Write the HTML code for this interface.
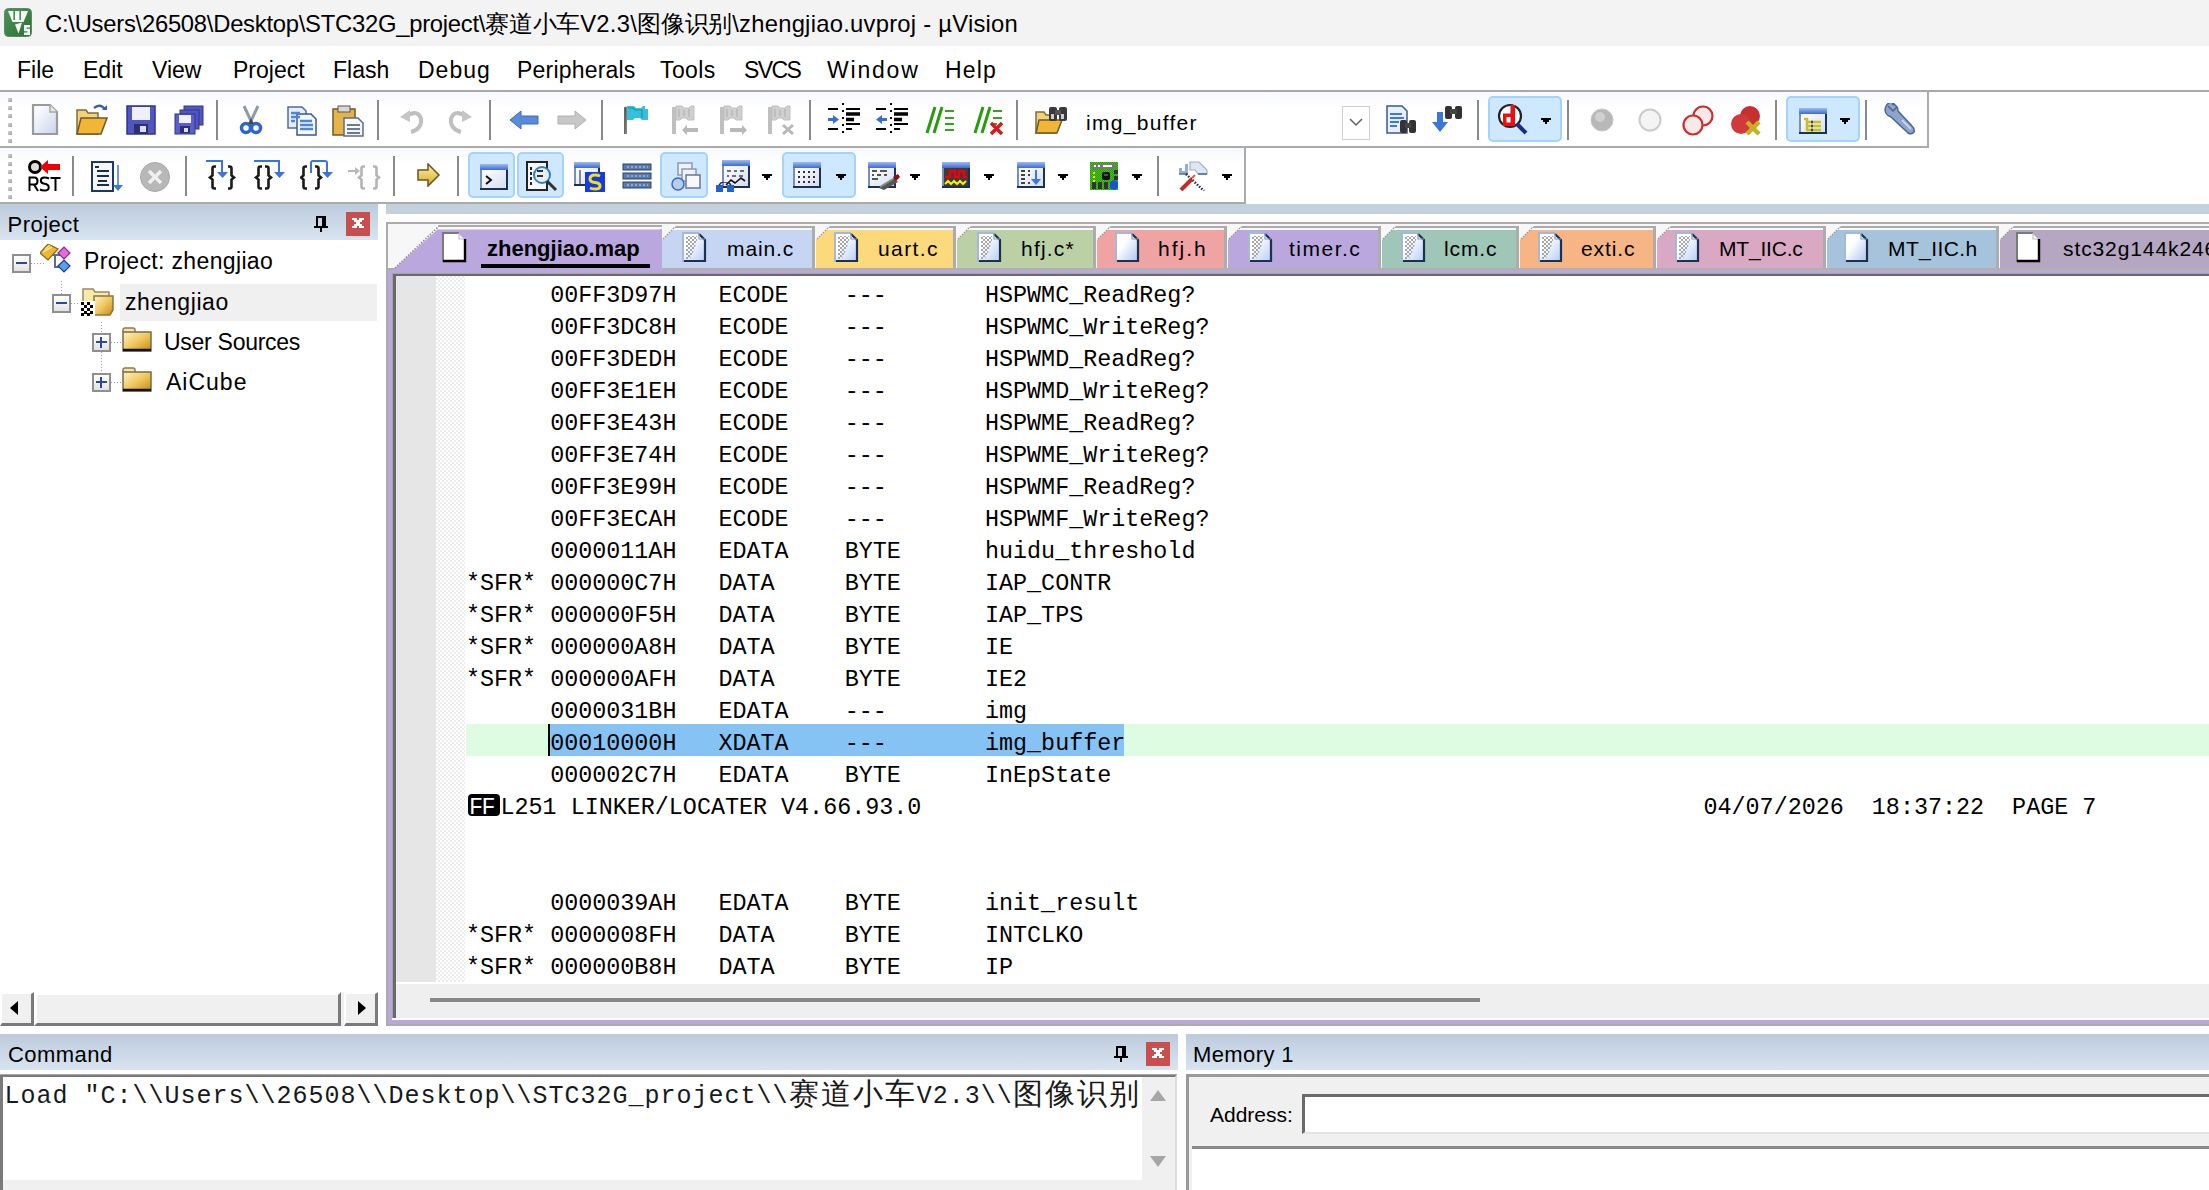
<!DOCTYPE html><html><head><meta charset="utf-8"><style>html,body{margin:0;padding:0;}body{width:2209px;height:1190px;overflow:hidden;position:relative;background:#fff;font-family:"Liberation Sans",sans-serif;color:#000;}div{box-sizing:border-box;}</style></head><body>
<div style="position:absolute;left:0px;top:0px;width:2209px;height:46px;background:#f3f3f3"></div>
<svg style="position:absolute;left:4px;top:8px;shape-rendering:auto" width="28" height="29" viewBox="0 0 28 29" shape-rendering="crispEdges"><defs><linearGradient id="lg" x1="0" y1="0" x2="1" y2="1"><stop offset="0" stop-color="#4a9458"/><stop offset="1" stop-color="#2e7238"/></linearGradient></defs><rect x="0.5" y="0.5" width="27" height="28" rx="4" fill="url(#lg)" stroke="#5a8a60" stroke-width="1"/><path d="M4 3H24L19.5 14H8.5Z" fill="#f4faf4"/><path d="M10.2 3V12M16.2 3V12" stroke="#4a8a52" stroke-width="1.6"/><path d="M11 16.5L18 14.5L14.5 25.5Z" fill="#f4faf4"/><path d="M20 17H26V19.6H22.6V20.8H26V27H20V24.4H23.4V23.2H20Z" fill="#f4faf4"/></svg>
<div style="position:absolute;left:45px;top:12px;font-family:'Liberation Sans', sans-serif;font-size:23.8px;line-height:1;white-space:pre;"><span style="letter-spacing:-0.25px">C:\Users\26508\Desktop\STC32G_project\</span><span style="display:inline-block;width:23.75px;text-align:center;font-size:23.8px;">赛</span><span style="display:inline-block;width:23.75px;text-align:center;font-size:23.8px;">道</span><span style="display:inline-block;width:23.75px;text-align:center;font-size:23.8px;">小</span><span style="display:inline-block;width:23.75px;text-align:center;font-size:23.8px;">车</span><span style="letter-spacing:0.28px">V2.3\</span><span style="display:inline-block;width:23.75px;text-align:center;font-size:23.8px;">图</span><span style="display:inline-block;width:23.75px;text-align:center;font-size:23.8px;">像</span><span style="display:inline-block;width:23.75px;text-align:center;font-size:23.8px;">识</span><span style="display:inline-block;width:23.75px;text-align:center;font-size:23.8px;">别</span><span style="letter-spacing:0.25px">\zhengjiao.uvproj - µVision</span></div>
<div style="position:absolute;left:17px;top:58.5px;font-family:'Liberation Sans', sans-serif;font-size:23px;line-height:1;white-space:pre;letter-spacing:0px">File</div>
<div style="position:absolute;left:83px;top:58.5px;font-family:'Liberation Sans', sans-serif;font-size:23px;line-height:1;white-space:pre;letter-spacing:0px">Edit</div>
<div style="position:absolute;left:152px;top:58.5px;font-family:'Liberation Sans', sans-serif;font-size:23px;line-height:1;white-space:pre;letter-spacing:0px">View</div>
<div style="position:absolute;left:233px;top:58.5px;font-family:'Liberation Sans', sans-serif;font-size:23px;line-height:1;white-space:pre;letter-spacing:0px">Project</div>
<div style="position:absolute;left:333px;top:58.5px;font-family:'Liberation Sans', sans-serif;font-size:23px;line-height:1;white-space:pre;letter-spacing:0px">Flash</div>
<div style="position:absolute;left:418px;top:58.5px;font-family:'Liberation Sans', sans-serif;font-size:23px;line-height:1;white-space:pre;letter-spacing:1.0px">Debug</div>
<div style="position:absolute;left:517px;top:58.5px;font-family:'Liberation Sans', sans-serif;font-size:23px;line-height:1;white-space:pre;letter-spacing:0.2px">Peripherals</div>
<div style="position:absolute;left:660px;top:58.5px;font-family:'Liberation Sans', sans-serif;font-size:23px;line-height:1;white-space:pre;letter-spacing:0.4px">Tools</div>
<div style="position:absolute;left:744px;top:58.5px;font-family:'Liberation Sans', sans-serif;font-size:23px;line-height:1;white-space:pre;letter-spacing:-1.6px">SVCS</div>
<div style="position:absolute;left:827px;top:58.5px;font-family:'Liberation Sans', sans-serif;font-size:23px;line-height:1;white-space:pre;letter-spacing:1.8px">Window</div>
<div style="position:absolute;left:945px;top:58.5px;font-family:'Liberation Sans', sans-serif;font-size:23px;line-height:1;white-space:pre;letter-spacing:1.2px">Help</div>
<div style="position:absolute;left:0px;top:90px;width:2209px;height:2px;background:#a9a9a9"></div>
<div style="position:absolute;left:0px;top:92px;width:1929px;height:56px;background:linear-gradient(#f7f9fd,#ffffff 30%);border-right:2px solid #ababab;border-bottom:2px solid #ababab"></div>
<div style="position:absolute;left:0px;top:148px;width:1246px;height:56px;background:linear-gradient(#f7f9fd,#ffffff 30%);border-right:2px solid #ababab;border-bottom:2px solid #ababab"></div>
<div style="position:absolute;left:8px;top:98.0px;width:4px;height:4px;background:linear-gradient(135deg,#d8d8d8,#a0a0a0)"></div><div style="position:absolute;left:8px;top:106.2px;width:4px;height:4px;background:linear-gradient(135deg,#d8d8d8,#a0a0a0)"></div><div style="position:absolute;left:8px;top:114.4px;width:4px;height:4px;background:linear-gradient(135deg,#d8d8d8,#a0a0a0)"></div><div style="position:absolute;left:8px;top:122.6px;width:4px;height:4px;background:linear-gradient(135deg,#d8d8d8,#a0a0a0)"></div><div style="position:absolute;left:8px;top:130.8px;width:4px;height:4px;background:linear-gradient(135deg,#d8d8d8,#a0a0a0)"></div><div style="position:absolute;left:8px;top:139.0px;width:4px;height:4px;background:linear-gradient(135deg,#d8d8d8,#a0a0a0)"></div>
<div style="position:absolute;left:8px;top:154.0px;width:4px;height:4px;background:linear-gradient(135deg,#d8d8d8,#a0a0a0)"></div><div style="position:absolute;left:8px;top:162.2px;width:4px;height:4px;background:linear-gradient(135deg,#d8d8d8,#a0a0a0)"></div><div style="position:absolute;left:8px;top:170.4px;width:4px;height:4px;background:linear-gradient(135deg,#d8d8d8,#a0a0a0)"></div><div style="position:absolute;left:8px;top:178.6px;width:4px;height:4px;background:linear-gradient(135deg,#d8d8d8,#a0a0a0)"></div><div style="position:absolute;left:8px;top:186.8px;width:4px;height:4px;background:linear-gradient(135deg,#d8d8d8,#a0a0a0)"></div><div style="position:absolute;left:8px;top:195.0px;width:4px;height:4px;background:linear-gradient(135deg,#d8d8d8,#a0a0a0)"></div>
<div style="position:absolute;left:216px;top:100px;width:2px;height:40px;background:#8a8a8a"></div>
<div style="position:absolute;left:377px;top:100px;width:2px;height:40px;background:#8a8a8a"></div>
<div style="position:absolute;left:489px;top:100px;width:2px;height:40px;background:#8a8a8a"></div>
<div style="position:absolute;left:601px;top:100px;width:2px;height:40px;background:#8a8a8a"></div>
<div style="position:absolute;left:809px;top:100px;width:2px;height:40px;background:#8a8a8a"></div>
<div style="position:absolute;left:1016px;top:100px;width:2px;height:40px;background:#8a8a8a"></div>
<div style="position:absolute;left:1477px;top:100px;width:2px;height:40px;background:#8a8a8a"></div>
<div style="position:absolute;left:1567px;top:100px;width:2px;height:40px;background:#8a8a8a"></div>
<div style="position:absolute;left:1775px;top:100px;width:2px;height:40px;background:#8a8a8a"></div>
<div style="position:absolute;left:1865px;top:100px;width:2px;height:40px;background:#8a8a8a"></div>
<div style="position:absolute;left:72px;top:156px;width:2px;height:40px;background:#8a8a8a"></div>
<div style="position:absolute;left:185px;top:156px;width:2px;height:40px;background:#8a8a8a"></div>
<div style="position:absolute;left:393px;top:156px;width:2px;height:40px;background:#8a8a8a"></div>
<div style="position:absolute;left:457px;top:156px;width:2px;height:40px;background:#8a8a8a"></div>
<div style="position:absolute;left:1157px;top:156px;width:2px;height:40px;background:#8a8a8a"></div>
<div style="position:absolute;left:1488px;top:96px;width:74px;height:46px;background:#cde8ff;border:2px solid #a5d3fb;border-radius:5px"></div>
<div style="position:absolute;left:1786px;top:96px;width:74px;height:46px;background:#cde8ff;border:2px solid #a5d3fb;border-radius:5px"></div>
<div style="position:absolute;left:468px;top:152px;width:47px;height:46px;background:#cde8ff;border:2px solid #a5d3fb;border-radius:5px"></div>
<div style="position:absolute;left:517px;top:152px;width:47px;height:46px;background:#cde8ff;border:2px solid #a5d3fb;border-radius:5px"></div>
<div style="position:absolute;left:660px;top:152px;width:48px;height:46px;background:#cde8ff;border:2px solid #a5d3fb;border-radius:5px"></div>
<div style="position:absolute;left:782px;top:152px;width:74px;height:46px;background:#cde8ff;border:2px solid #a5d3fb;border-radius:5px"></div>
<svg width="0" height="0" style="position:absolute"><defs><linearGradient id="wt" x1="0" y1="0" x2="0" y2="1"><stop offset="0" stop-color="#9cbcf0"/><stop offset="1" stop-color="#3a6ad8"/></linearGradient><linearGradient id="wb" x1="0" y1="0" x2="1" y2="1"><stop offset="0" stop-color="#ffffff"/><stop offset="1" stop-color="#d4ddf0"/></linearGradient></defs></svg>
<svg style="position:absolute;left:31px;top:103px" width="28" height="32" viewBox="0 0 28 32"><defs><linearGradient id="ng" x1="0" y1="0" x2="1" y2="1"><stop offset="0.2" stop-color="#f8faff"/><stop offset="1" stop-color="#c8d4ec"/></linearGradient></defs><path d="M2 2H19L26 9V31H2Z" fill="url(#ng)" stroke="#9a9a9a" stroke-width="2.2"/><path d="M19 2V9H26" fill="#e8e8e8" stroke="#a8a8a8" stroke-width="1.5"/></svg>
<svg style="position:absolute;left:76px;top:104px" width="32" height="32" viewBox="0 0 32 32"><path d="M1 6H10L12 9H22V30H1Z" fill="#f3d27a" stroke="#7f6b43" stroke-width="1.5"/><path d="M5 14H31L25 30H1Z" fill="#f1b636" stroke="#6b5a30" stroke-width="1.5"/><path d="M18 4Q24 -1 29 5" stroke="#3b5ea8" stroke-width="2.5" fill="none"/><path d="M26 6H31V1Z" fill="#3b5ea8"/></svg>
<svg style="position:absolute;left:126px;top:105px" width="30" height="30" viewBox="0 0 30 30"><rect x="1" y="1" width="28" height="28" fill="#5157c0" stroke="#30358c" stroke-width="1.5"/><rect x="6" y="2" width="18" height="13" fill="#eef0fa"/><rect x="8" y="19" width="14" height="10" fill="#2c2f70"/><rect x="14" y="21" width="6" height="6" fill="#dcdcf0"/></svg>
<svg style="position:absolute;left:174px;top:105px" width="30" height="30" viewBox="0 0 30 30"><rect x="10" y="1" width="19" height="19" fill="#5157c0" stroke="#30358c"/><rect x="6" y="5" width="19" height="19" fill="#5157c0" stroke="#30358c"/><rect x="1" y="9" width="20" height="20" fill="#5a60c8" stroke="#30358c"/><rect x="5" y="10" width="12" height="8" fill="#eef0fa"/><rect x="6" y="21" width="10" height="7" fill="#2c2f70"/><rect x="10" y="23" width="4" height="4" fill="#dcdcf0"/></svg>
<svg style="position:absolute;left:239px;top:104px" width="24" height="32" viewBox="0 0 24 32"><path d="M5 2L12 17L19 2" stroke="#8f9aa8" stroke-width="3" fill="none"/><circle cx="7" cy="24" r="4.5" fill="none" stroke="#2f66c8" stroke-width="3.5"/><circle cx="17" cy="24" r="4.5" fill="none" stroke="#2f66c8" stroke-width="3.5"/><path d="M9 20L12 14L15 20" fill="#3a4a60"/></svg>
<svg style="position:absolute;left:286px;top:106px" width="32" height="30" viewBox="0 0 30 30"><path d="M1 1H15L19 5V22H1Z" fill="#e8eef8" stroke="#4c6c9c" stroke-width="1.5"/><path d="M10 8H24L29 13V29H10Z" fill="#f4f7fc" stroke="#3a5a90" stroke-width="1.5"/><path d="M4 7H13M4 11H13M4 15H8M13 15H25M13 19H26M13 23H26" stroke="#4d86d8" stroke-width="2.5"/></svg>
<svg style="position:absolute;left:332px;top:105px" width="33" height="32" viewBox="0 0 33 32"><rect x="1" y="4" width="22" height="26" fill="#e4b44a" stroke="#6f5a2a" stroke-width="1.5"/><rect x="6" y="1" width="12" height="6" fill="#d8d8d8" stroke="#555"/><path d="M12 13H26L31 18V31H12Z" fill="#f5f7fb" stroke="#5d6d80" stroke-width="1.5"/><path d="M15 20H28M15 24H28M15 28H28" stroke="#6a7a92" stroke-width="2"/></svg>
<svg style="position:absolute;left:398px;top:107px" width="28" height="28" viewBox="0 0 28 28"><path d="M9 9Q20 2 23 12Q24 22 13 25" stroke="#c0c0c0" stroke-width="4" fill="none"/><path d="M2 10L12 3V15Z" fill="#c6c6c6"/></svg>
<svg style="position:absolute;left:446px;top:107px" width="28" height="28" viewBox="0 0 28 28"><path d="M19 9Q8 2 5 12Q4 22 15 25" stroke="#c0c0c0" stroke-width="4" fill="none"/><path d="M26 10L16 3V15Z" fill="#c6c6c6"/></svg>
<svg style="position:absolute;left:509px;top:110px" width="30" height="20" viewBox="0 0 30 20"><path d="M1 10L12 1V6H29V14H12V19Z" fill="#5a8ad8" stroke="#3c6cc0" stroke-width="1"/></svg>
<svg style="position:absolute;left:557px;top:110px" width="30" height="20" viewBox="0 0 30 20"><path d="M29 10L18 1V6H1V14H18V19Z" fill="#c8c8c8" stroke="#b0b0b0" stroke-width="1"/></svg>
<svg style="position:absolute;left:622px;top:105px" width="28" height="30" viewBox="0 0 28 30"><path d="M2 2H5V29H2Z" fill="#6a6a6a"/><path d="M3 2H4V29" stroke="#9a9a9a" stroke-width="1"/><path d="M5 1H12L14 3H19L21 1H23V4H26V15H20L18 13H13L11 15H5Z" fill="#35c0dc"/><path d="M6 3H11L13 5H20V13" stroke="#1a90b0" stroke-width="1.2" fill="none"/></svg>
<svg style="position:absolute;left:670px;top:105px" width="30" height="30" viewBox="0 0 30 30"><path d="M2 2H6V29H2Z" fill="#c0c0c0"/><path d="M6 1H12L14 3H19L21 1H24V15H18L16 13H12L10 15H6Z" fill="#d0d0d0" stroke="#c0c0c0"/><path d="M9 4V12M14 5V11M19 4V12" stroke="#b8b8b8" stroke-width="1.5"/><path d="M15 25H28" stroke="#b8b8b8" stroke-width="4"/><path d="M12 25L17 20V30Z" fill="#b8b8b8"/></svg>
<svg style="position:absolute;left:718px;top:105px" width="30" height="30" viewBox="0 0 30 30"><path d="M2 2H6V29H2Z" fill="#c0c0c0"/><path d="M6 1H12L14 3H19L21 1H24V15H18L16 13H12L10 15H6Z" fill="#d0d0d0" stroke="#c0c0c0"/><path d="M9 4V12M14 5V11M19 4V12" stroke="#b8b8b8" stroke-width="1.5"/><path d="M12 25H24" stroke="#b8b8b8" stroke-width="4"/><path d="M29 25L24 20V30Z" fill="#b8b8b8"/></svg>
<svg style="position:absolute;left:766px;top:105px" width="30" height="30" viewBox="0 0 30 30"><path d="M2 2H6V29H2Z" fill="#c0c0c0"/><path d="M6 1H12L14 3H19L21 1H24V15H18L16 13H12L10 15H6Z" fill="#d0d0d0" stroke="#c0c0c0"/><path d="M9 4V12M14 5V11M19 4V12" stroke="#b8b8b8" stroke-width="1.5"/><path d="M17 20L27 29M27 20L17 29" stroke="#b8b8b8" stroke-width="3"/></svg>
<svg style="position:absolute;left:828px;top:103px" width="32" height="32" viewBox="0 0 32 32"><path d="M15 0V32" stroke="#000" stroke-width="2" stroke-dasharray="2 5"/><path d="M0 6H10M18 6H32M0 26H10M18 26H24M18 21H32" stroke="#000" stroke-width="2"/><path d="M18 11H32M18 16.5H26" stroke="#000" stroke-width="3.5"/><path d="M0 16.5H6" stroke="#3c6ed0" stroke-width="3"/><path d="M5 12L11 16.5L5 21Z" fill="#3c6ed0"/></svg>
<svg style="position:absolute;left:876px;top:103px" width="32" height="32" viewBox="0 0 32 32"><path d="M15 0V32" stroke="#000" stroke-width="2" stroke-dasharray="2 5"/><path d="M0 6H10M18 6H32M0 26H10M18 26H24M18 21H32" stroke="#000" stroke-width="2"/><path d="M18 11H32M18 16.5H26" stroke="#000" stroke-width="3.5"/><path d="M5 16.5H11" stroke="#3c6ed0" stroke-width="3"/><path d="M6 12L0 16.5L6 21Z" fill="#3c6ed0"/></svg>
<svg style="position:absolute;left:925px;top:104px" width="32" height="30" viewBox="0 0 32 30"><path d="M2 29L10 3M9 29L17 3" stroke="#2a9a10" stroke-width="3"/><path d="M20 7H29M20 14H29M20 20H29M20 26H29" stroke="#3aa020" stroke-width="2"/></svg>
<svg style="position:absolute;left:973px;top:104px" width="32" height="31" viewBox="0 0 32 31"><path d="M2 29L10 3M9 29L17 3" stroke="#2a9a10" stroke-width="3"/><path d="M20 7H29M20 14H29M20 20H24" stroke="#3aa020" stroke-width="2"/><path d="M18 19L29 30M29 19L18 30" stroke="#d81818" stroke-width="3.5"/></svg>
<svg style="position:absolute;left:1035px;top:105px" width="34" height="30" viewBox="0 0 34 30"><path d="M1 7H9L11 10H20V28H1Z" fill="#f3d27a" stroke="#7f6b43" stroke-width="1.5"/><path d="M4 15H27L22 28H1Z" fill="#f1b636" stroke="#6b5a30" stroke-width="1.5"/><rect x="14" y="2" width="8" height="14" rx="2" fill="#3a3a3a"/><rect x="24" y="2" width="8" height="14" rx="2" fill="#3a3a3a"/><rect x="20" y="5" width="6" height="5" fill="#555"/><rect x="16" y="9" width="3" height="5" fill="#ccc"/><rect x="26" y="9" width="3" height="5" fill="#ccc"/></svg>
<div style="position:absolute;left:1086px;top:112px;font-family:'Liberation Sans', sans-serif;font-size:21px;line-height:1;white-space:pre;letter-spacing:1.3px">img_buffer</div>
<div style="position:absolute;left:1342px;top:106px;width:28px;height:34px;border:1px solid #cfcfcf;background:#fff"></div>
<svg style="position:absolute;left:1348px;top:116px" width="16" height="12" viewBox="0 0 16 12"><path d="M2 3L8 9L14 3" stroke="#606060" stroke-width="1.5" fill="none"/></svg>
<svg style="position:absolute;left:1385px;top:105px" width="32" height="30" viewBox="0 0 32 30"><path d="M2 1H17L22 6V28H2Z" fill="#e9eef8" stroke="#39598f" stroke-width="1.5"/><path d="M5 9H17M5 13H19M5 17H14M5 21H12" stroke="#3d7ad8" stroke-width="2.2"/><rect x="15" y="15" width="7" height="13" rx="2" fill="#333"/><rect x="24" y="15" width="7" height="13" rx="2" fill="#333"/><rect x="20" y="18" width="6" height="5" fill="#444"/></svg>
<svg style="position:absolute;left:1431px;top:104px" width="32" height="30" viewBox="0 0 32 30"><path d="M6 8V18H1L9 28L17 18H12V8Z" fill="#3a78d8"/><rect x="14" y="2" width="7" height="13" rx="2" fill="#333"/><rect x="24" y="2" width="7" height="13" rx="2" fill="#333"/><rect x="19" y="5" width="7" height="5" fill="#444"/></svg>
<svg style="position:absolute;left:1497px;top:103px" width="32" height="32" viewBox="0 0 32 32"><circle cx="13" cy="13" r="11" fill="#fff" stroke="#222" stroke-width="2.2"/><path d="M13.5 2H18V23H6V10.5H13.5Z M9.5 14V19.5H13.5V14Z" fill="#e81010" fill-rule="evenodd"/><path d="M20 21L29 30" stroke="#1a2a8a" stroke-width="4"/></svg>
<svg style="position:absolute;left:1541px;top:118px" width="10" height="6" viewBox="0 0 10 6" shape-rendering="crispEdges"><path d="M0 0H10V2H8V4H6V6H4V4H2V2H0Z" fill="#000"/></svg>
<svg style="position:absolute;left:1589px;top:107px" width="26" height="26" viewBox="0 0 26 26"><circle cx="13" cy="13" r="11" fill="#b8b8b8" stroke="#c8c8c8" stroke-width="1"/><circle cx="11" cy="10" r="5" fill="#d0d0d0"/></svg>
<svg style="position:absolute;left:1637px;top:107px" width="26" height="26" viewBox="0 0 26 26"><circle cx="13" cy="13" r="10.5" fill="#f4f4f4" stroke="#cbcbcb" stroke-width="2"/></svg>
<svg style="position:absolute;left:1681px;top:104px" width="34" height="32" viewBox="0 0 34 32"><circle cx="22" cy="12" r="9.5" fill="#fbe8e8" stroke="#d02a2a" stroke-width="2.2"/><circle cx="12" cy="21" r="9.5" fill="#fbe8e8" stroke="#d02a2a" stroke-width="2.2"/></svg>
<svg style="position:absolute;left:1729px;top:104px" width="34" height="32" viewBox="0 0 34 32"><circle cx="21" cy="12" r="10" fill="#c83030"/><circle cx="12" cy="20" r="10" fill="#d03a3a"/><path d="M18 18L30 30M30 18L18 30" stroke="#c8b020" stroke-width="4.5"/></svg>
<svg style="position:absolute;left:1799px;top:108px" width="28" height="26" viewBox="0 0 28 26"><rect x="0" y="0" width="28" height="26" fill="#1c3050"/><rect x="0" y="0" width="26" height="24" fill="#7890b8"/><rect x="2" y="6" width="24" height="18" fill="url(#wb)"/><rect x="0" y="0" width="28" height="6" fill="url(#wt)"/><path d="M5 11H8V23M8 14H22M8 18H22M8 22H22" stroke="#c8c020" stroke-width="2.5" fill="none"/><path d="M12 14H14M12 18H14M12 22H14" stroke="#444" stroke-width="2.5"/></svg>
<svg style="position:absolute;left:1840px;top:118px" width="10" height="6" viewBox="0 0 10 6" shape-rendering="crispEdges"><path d="M0 0H10V2H8V4H6V6H4V4H2V2H0Z" fill="#000"/></svg>
<svg style="position:absolute;left:1884px;top:103px" width="32" height="32" viewBox="0 0 32 32"><path d="M4 3L9 8L13 4L8 -1Q2 0 1 6Q1 12 7 14L24 30Q28 32 30 29Q31 26 28 23L14 8Q14 2 8 1" fill="#8ea4c8" stroke="#4a6494" stroke-width="1.5"/><path d="M18 17L27 26" stroke="#c8d4e8" stroke-width="2"/></svg>
<svg style="position:absolute;left:27px;top:159px" width="34" height="34" viewBox="0 0 34 34"><circle cx="8" cy="8" r="5.5" fill="#dcdcdc" stroke="#000" stroke-width="3"/><path d="M13 8L21 1V5H33V11H21V15Z" fill="#f00000"/><path d="M2.5 32V18.5H7.5Q10.5 18.5 10.5 22Q10.5 25.5 7.5 25.5H2.5M7 25.5L11 32" stroke="#000" stroke-width="2" fill="none"/><path d="M22 19.5Q20 18.5 17.5 18.5Q13.8 18.5 13.8 21.5Q13.8 24.3 17.5 24.8Q21.7 25.3 21.7 28.5Q21.7 31.5 17.5 31.5Q15 31.5 13 30.5" stroke="#000" stroke-width="2" fill="none"/><path d="M23.5 19H33.5M28.5 19V32" stroke="#000" stroke-width="2"/></svg>
<svg style="position:absolute;left:91px;top:161px" width="34" height="32" viewBox="0 0 34 32"><rect x="1" y="1" width="21" height="29" fill="#f4f6fa" stroke="#1c3866" stroke-width="2"/><path d="M4 6H8M6 10H18M6 15H18M7 20H16M6 24H18" stroke="#1c2c4c" stroke-width="2"/><path d="M27 4V28" stroke="#3a78d8" stroke-width="1.5"/><path d="M22 24H32L27 30Z" fill="#3a78d8"/></svg>
<svg style="position:absolute;left:139px;top:161px" width="32" height="32" viewBox="0 0 32 32"><circle cx="16" cy="16" r="14.5" fill="#b8b8b8" stroke="#a8a8a8"/><path d="M10 10L22 22M22 10L10 22" stroke="#f0f0f0" stroke-width="3.5"/></svg>
<svg style="position:absolute;left:205px;top:158px" width="34" height="32" viewBox="0 0 34 32"><path d="M11 8.5H9.5Q7.5 8.5 7.5 10.5V17.5L5 19.5L7.5 21.5V28.5Q7.5 30.5 9.5 30.5H11" stroke="#1a1a1a" stroke-width="2.6" fill="none"/><path d="M23 8.5H24.5Q26.5 8.5 26.5 10.5V17.5L29 19.5L26.5 21.5V28.5Q26.5 30.5 24.5 30.5H23" stroke="#1a1a1a" stroke-width="2.6" fill="none"/><path d="M1 3H17V15" stroke="#3a74e0" stroke-width="2" fill="none"/><path d="M12 14H23L17.5 20Z" fill="#3a74e0"/></svg>
<svg style="position:absolute;left:253px;top:158px" width="34" height="32" viewBox="0 0 34 32"><path d="M9 8.5H7.5Q5.5 8.5 5.5 10.5V17.5L3 19.5L5.5 21.5V28.5Q5.5 30.5 7.5 30.5H9" stroke="#1a1a1a" stroke-width="2.6" fill="none"/><path d="M12 8.5H13.5Q15.5 8.5 15.5 10.5V17.5L18 19.5L15.5 21.5V28.5Q15.5 30.5 13.5 30.5H12" stroke="#1a1a1a" stroke-width="2.6" fill="none"/><path d="M1 3H26V15" stroke="#3a74e0" stroke-width="2" fill="none"/><path d="M21 14H32L26.5 20Z" fill="#3a74e0"/></svg>
<svg style="position:absolute;left:300px;top:158px" width="34" height="32" viewBox="0 0 34 32"><path d="M7 8.5H5.5Q3.5 8.5 3.5 10.5V17.5L1 19.5L3.5 21.5V28.5Q3.5 30.5 5.5 30.5H7" stroke="#1a1a1a" stroke-width="2.6" fill="none"/><path d="M15 8.5H16.5Q18.5 8.5 18.5 10.5V17.5L21 19.5L18.5 21.5V28.5Q18.5 30.5 16.5 30.5H15" stroke="#1a1a1a" stroke-width="2.6" fill="none"/><path d="M11 15V5Q11 3 13 3H25Q27 3 27 5V15" stroke="#3a74e0" stroke-width="2" fill="none"/><path d="M22 14H33L27.5 20Z" fill="#3a74e0"/></svg>
<svg style="position:absolute;left:348px;top:158px" width="34" height="32" viewBox="0 0 34 32"><path d="M17 8.5H15.5Q13.5 8.5 13.5 10.5V17.5L11 19.5L13.5 21.5V28.5Q13.5 30.5 15.5 30.5H17" stroke="#b4b4b4" stroke-width="2.6" fill="none"/><path d="M25 8.5H26.5Q28.5 8.5 28.5 10.5V17.5L31 19.5L28.5 21.5V28.5Q28.5 30.5 26.5 30.5H25" stroke="#b4b4b4" stroke-width="2.6" fill="none"/><path d="M0 13H8" stroke="#b8b8b8" stroke-width="2"/><path d="M7 9L12 13L7 17Z" fill="#b8b8b8"/></svg>
<svg style="position:absolute;left:417px;top:163px" width="24" height="24" viewBox="0 0 24 24"><defs><linearGradient id="ya" x1="0" y1="0" x2="0" y2="1"><stop offset="0" stop-color="#fff4b0"/><stop offset="1" stop-color="#d8a820"/></linearGradient></defs><path d="M1 7H11V1L22 12L11 23V17H1Z" fill="url(#ya)" stroke="#6a5420" stroke-width="1.5"/></svg>
<svg style="position:absolute;left:480px;top:164px" width="28" height="26" viewBox="0 0 28 26"><rect x="0" y="0" width="28" height="26" fill="#1c3050"/><rect x="0" y="0" width="26" height="24" fill="#7890b8"/><rect x="2" y="6" width="24" height="18" fill="url(#wb)"/><rect x="0" y="0" width="28" height="6" fill="url(#wt)"/><path d="M6 12L11 16L6 20" stroke="#111" stroke-width="2" fill="none"/></svg>
<svg style="position:absolute;left:525px;top:160px" width="34" height="32" viewBox="0 0 34 32"><rect x="2" y="2" width="20" height="28" fill="#f4f6fa" stroke="#222" stroke-width="2"/><path d="M6 7V25" stroke="#222" stroke-width="2" stroke-dasharray="3 2"/><circle cx="17" cy="15" r="8" fill="#e8eef6" stroke="#3080c0" stroke-width="2"/><path d="M12 11H18M12 16H18" stroke="#333" stroke-width="2"/><path d="M22 21L31 30" stroke="#333" stroke-width="3"/></svg>
<svg style="position:absolute;left:574px;top:162px" width="26" height="24" viewBox="0 0 26 24"><rect x="0" y="0" width="26" height="24" fill="#1c3050"/><rect x="0" y="0" width="24" height="22" fill="#7890b8"/><rect x="2" y="6" width="22" height="16" fill="url(#wb)"/><rect x="0" y="0" width="26" height="6" fill="url(#wt)"/><path d="M6 8V22" stroke="#888" stroke-width="2"/></svg><svg style="position:absolute;left:585px;top:172px" width="20" height="20" viewBox="0 0 20 20"><rect x="0" y="0" width="20" height="20" fill="#1838e0"/><path d="M15 4Q13 3 10 3Q5 3 5 7Q5 10 10 10.5Q15 11 15 14Q15 17 10 17Q7 17 5 16" stroke="#f0e020" stroke-width="3" fill="none"/></svg>
<svg style="position:absolute;left:622px;top:163px" width="30" height="26" viewBox="0 0 30 26"><rect x="1" y="1" width="28" height="6" fill="#5b7ab0" stroke="#2b4468"/><rect x="1" y="10" width="28" height="6" fill="#5b7ab0" stroke="#2b4468"/><rect x="1" y="19" width="28" height="6" fill="#5b7ab0" stroke="#2b4468"/><path d="M5 4H26M5 13H26M5 22H26" stroke="#c8d8f0" stroke-dasharray="2 2"/></svg>
<svg style="position:absolute;left:670px;top:160px" width="32" height="32" viewBox="0 0 32 32"><rect x="8" y="3" width="14" height="12" fill="#eef2f8" stroke="#8a98b0" stroke-width="1.5"/><rect x="12" y="9" width="14" height="12" fill="#eef2f8" stroke="#8a98b0" stroke-width="1.5"/><rect x="16" y="15" width="14" height="13" fill="#f6f8fb" stroke="#6a7890" stroke-width="1.5"/><circle cx="8" cy="24" r="6" fill="#b8ccec" stroke="#3a6ac0" stroke-width="1.5"/></svg>
<svg style="position:absolute;left:722px;top:160px" width="28" height="28" viewBox="0 0 28 28"><rect x="0" y="0" width="28" height="28" fill="#1c3050"/><rect x="0" y="0" width="26" height="26" fill="#7890b8"/><rect x="2" y="6" width="24" height="20" fill="url(#wb)"/><rect x="0" y="0" width="28" height="6" fill="url(#wt)"/><path d="M5 11H9M12 11H15M18 11H22M5 16H7M10 16H14M17 16H21" stroke="#444" stroke-width="1.6"/><path d="M4 25L9 20L13 23L19 18L23 21" stroke="#111" stroke-width="1.6" fill="none"/></svg><svg style="position:absolute;left:716px;top:182px" width="20" height="10" viewBox="0 0 20 10"><rect x="0" y="3" width="7" height="7" fill="#2060d0"/><rect x="11" y="3" width="7" height="7" fill="#2060d0"/><path d="M3 3L6 0H12L15 3" stroke="#1a2a50" stroke-width="1.5" fill="none"/></svg>
<svg style="position:absolute;left:762px;top:174px" width="10" height="6" viewBox="0 0 10 6" shape-rendering="crispEdges"><path d="M0 0H10V2H8V4H6V6H4V4H2V2H0Z" fill="#000"/></svg>
<svg style="position:absolute;left:793px;top:162px" width="28" height="26" viewBox="0 0 28 26"><rect x="0" y="0" width="28" height="26" fill="#1c3050"/><rect x="0" y="0" width="26" height="24" fill="#7890b8"/><rect x="2" y="6" width="24" height="18" fill="url(#wb)"/><rect x="0" y="0" width="28" height="6" fill="url(#wt)"/><path d="M5 10H7M10 10H12M15 10H17M20 10H22M5 15H7M10 15H12M15 15H17M20 15H22M5 20H7M10 20H12M15 20H17M20 20H22" stroke="#333" stroke-width="2"/></svg>
<svg style="position:absolute;left:836px;top:174px" width="10" height="6" viewBox="0 0 10 6" shape-rendering="crispEdges"><path d="M0 0H10V2H8V4H6V6H4V4H2V2H0Z" fill="#000"/></svg>
<svg style="position:absolute;left:868px;top:162px" width="28" height="26" viewBox="0 0 28 26"><rect x="0" y="0" width="28" height="26" fill="#1c3050"/><rect x="0" y="0" width="26" height="24" fill="#7890b8"/><rect x="2" y="6" width="24" height="18" fill="url(#wb)"/><rect x="0" y="0" width="28" height="6" fill="url(#wt)"/><path d="M4 9H9M12 9H19M4 17H10" stroke="#555" stroke-width="2"/><path d="M4 13H6M9 13H13M16 13H19" stroke="#555" stroke-width="2"/></svg><svg style="position:absolute;left:878px;top:174px" width="22" height="16" viewBox="0 0 22 16"><path d="M1 14L16 4L20 8L6 16Z" fill="#555"/><path d="M2 13L15 5" stroke="#888" stroke-width="2"/><path d="M15 3L20 0L22 3L18 7Z" fill="#8a1010"/></svg>
<svg style="position:absolute;left:910px;top:174px" width="10" height="6" viewBox="0 0 10 6" shape-rendering="crispEdges"><path d="M0 0H10V2H8V4H6V6H4V4H2V2H0Z" fill="#000"/></svg>
<svg style="position:absolute;left:942px;top:162px" width="28" height="26" viewBox="0 0 28 26"><rect x="0" y="0" width="28" height="26" fill="#1c3050"/><rect x="0" y="0" width="26" height="24" fill="#7890b8"/><rect x="2" y="6" width="24" height="18" fill="#3c3c3c"/><rect x="0" y="0" width="28" height="6" fill="url(#wt)"/><path d="M3 15H8V9H13V15H17V9H22V15H25" stroke="#f00000" stroke-width="2.5" fill="none"/><path d="M3 22L6 19L9 22L12 19L15 22L18 19L21 22L24 19" stroke="#f0f000" stroke-width="2" fill="none"/></svg>
<svg style="position:absolute;left:984px;top:174px" width="10" height="6" viewBox="0 0 10 6" shape-rendering="crispEdges"><path d="M0 0H10V2H8V4H6V6H4V4H2V2H0Z" fill="#000"/></svg>
<svg style="position:absolute;left:1017px;top:162px" width="28" height="26" viewBox="0 0 28 26"><rect x="0" y="0" width="28" height="26" fill="#1c3050"/><rect x="0" y="0" width="26" height="24" fill="#7890b8"/><rect x="2" y="6" width="24" height="18" fill="url(#wb)"/><rect x="0" y="0" width="28" height="6" fill="url(#wt)"/><path d="M4 9H8M4 13H8M4 17H8M4 21H8M11 9H13M11 13H13M11 21H13" stroke="#444" stroke-width="2"/><path d="M19 8V20" stroke="#3a78e0" stroke-width="2"/><path d="M14 17H24L19 23Z" fill="#3a78e0"/></svg>
<svg style="position:absolute;left:1058px;top:174px" width="10" height="6" viewBox="0 0 10 6" shape-rendering="crispEdges"><path d="M0 0H10V2H8V4H6V6H4V4H2V2H0Z" fill="#000"/></svg>
<svg style="position:absolute;left:1090px;top:162px" width="28" height="28" viewBox="0 0 28 28"><defs><pattern id="gck" width="2" height="2" patternUnits="userSpaceOnUse"><rect width="2" height="2" fill="#46c21e"/><rect width="1" height="1" fill="#2e9a10"/><rect x="1" y="1" width="1" height="1" fill="#2e9a10"/></pattern></defs><rect x="0" y="0" width="28" height="28" fill="url(#gck)"/><rect x="2" y="2" width="24" height="5" fill="#777"/><path d="M4 4H6M8 4H10M13 4H22" stroke="#fff" stroke-width="2"/><rect x="12" y="10" width="8" height="8" rx="2" fill="#111"/><rect x="14" y="12" width="4" height="2" fill="#555"/><path d="M3 11H5M3 15H5M3 19H5" stroke="#f0e000" stroke-width="2"/><rect x="2" y="20" width="4" height="7" fill="#333"/><rect x="8" y="20" width="4" height="7" fill="#333"/><rect x="14" y="20" width="4" height="7" fill="#333"/><rect x="24" y="8" width="4" height="4" fill="#333"/><rect x="24" y="14" width="4" height="4" fill="#333"/><path d="M20 20L24 18L28 20V26L24 28L20 26Z" fill="#1a50e0"/></svg>
<svg style="position:absolute;left:1132px;top:174px" width="10" height="6" viewBox="0 0 10 6" shape-rendering="crispEdges"><path d="M0 0H10V2H8V4H6V6H4V4H2V2H0Z" fill="#000"/></svg>
<svg style="position:absolute;left:1177px;top:161px" width="34" height="30" viewBox="0 0 34 30"><path d="M2 11V7H5V10H8V3H11V13H2Z" fill="#9aaccc"/><path d="M2 13H11" stroke="#5a6f90" stroke-width="1.5"/><path d="M13 1H22L30 9V13H21L18 9H13Z" fill="#dfe6f0" stroke="#9ab0cc" stroke-width="1.2"/><path d="M21 13H30" stroke="#6a80a8" stroke-width="2"/><path d="M9 13L27 30" stroke="#1c2c4c" stroke-width="2.5" stroke-dasharray="1.5 1.5"/><path d="M4 29L15 18" stroke="#c82828" stroke-width="4"/><path d="M15 17L18 14" stroke="#e86040" stroke-width="2"/></svg>
<svg style="position:absolute;left:1222px;top:174px" width="10" height="6" viewBox="0 0 10 6" shape-rendering="crispEdges"><path d="M0 0H10V2H8V4H6V6H4V4H2V2H0Z" fill="#000"/></svg>
<div style="position:absolute;left:0px;top:204px;width:2209px;height:10px;background:#c3d0dd"></div>
<div style="position:absolute;left:0px;top:204px;width:378px;height:36px;background:linear-gradient(#bccbdc,#d8e4f0)"></div>
<div style="position:absolute;left:7.5px;top:213.5px;font-family:'Liberation Sans', sans-serif;font-size:22px;line-height:1;white-space:pre;letter-spacing:0.5px">Project</div>
<svg style="position:absolute;left:313px;top:215px" width="16" height="18" viewBox="0 0 16 18"><path d="M3 1H13V11H3Z M5 3V11H9V3Z" fill="#000" fill-rule="evenodd"/><rect x="1" y="11" width="14" height="2" fill="#000"/><rect x="7" y="13" width="2" height="4" fill="#000"/></svg>
<div style="position:absolute;left:346px;top:212px;width:24px;height:24px;background:#c94f4f"></div><svg style="position:absolute;left:352px;top:218px" width="12" height="12" viewBox="0 0 12 12" shape-rendering="crispEdges"><path d="M0 0H5V2H0Z M7 0H12V2H7Z M2 2H10V4H2Z M4 4H8V6H4Z M2 6H10V8H2Z M0 8H5V10H0Z M7 8H12V10H7Z" fill="#fff"/></svg>
<div style="position:absolute;left:378px;top:204px;width:8px;height:822px;background:#fff"></div>
<div style="position:absolute;left:12px;top:254px;width:19px;height:19px;border:2px solid #909090;background:linear-gradient(#ffffff,#e2e2e2)"></div><div style="position:absolute;left:16px;top:262px;width:11px;height:2px;background:#2a4a98"></div>
<div style="position:absolute;left:31px;top:263px;width:13px;height:1px;background:repeating-linear-gradient(90deg,#9a9a9a 0 1px,transparent 1px 3px)"></div>
<svg style="position:absolute;left:40px;top:244px" width="32" height="30" viewBox="0 0 32 30"><path d="M0 9L8 0L18 5L8 16Z" fill="#e9b834" stroke="#8a6410" stroke-width="1.2"/><path d="M5 5L10 1M3 8L12 3" stroke="#f8e090" stroke-width="1.5"/><path d="M12 11H20M15 11V23H19" stroke="#5a7090" stroke-width="2" fill="none"/><path d="M18 9L24 3L30 9L24 15Z" fill="#e070d8" stroke="#9a20a0" stroke-width="1.2"/><path d="M18 22L24 16L30 22L24 28Z" fill="#5aa0e8" stroke="#1a3aa0" stroke-width="1.2"/></svg>
<div style="position:absolute;left:84px;top:249.5px;font-family:'Liberation Sans', sans-serif;font-size:23px;line-height:1;white-space:pre;letter-spacing:0.35px">Project: zhengjiao</div>
<div style="position:absolute;left:61px;top:281px;width:1px;height:13px;background:repeating-linear-gradient(#9a9a9a 0 1px,transparent 1px 3px)"></div>
<div style="position:absolute;left:120px;top:284px;width:257px;height:37px;background:#f0f0f0"></div>
<div style="position:absolute;left:52px;top:294px;width:19px;height:19px;border:2px solid #909090;background:linear-gradient(#ffffff,#e2e2e2)"></div><div style="position:absolute;left:56px;top:302px;width:11px;height:2px;background:#2a4a98"></div>
<div style="position:absolute;left:71px;top:303px;width:11px;height:1px;background:repeating-linear-gradient(90deg,#9a9a9a 0 1px,transparent 1px 3px)"></div>
<svg style="position:absolute;left:80px;top:286px" width="34" height="30" viewBox="0 0 34 30"><path d="M3 3H13L15 6H29V26H3Z" fill="#f8eaa8" stroke="#9a8a60" stroke-width="1.5"/><path d="M14 10H33V24L30 29H14Z" fill="url(#fg)" stroke="#8a7440" stroke-width="1.5"/><rect x="0" y="15" width="15" height="15" fill="#fff"/><path d="M1 16H4V19H1Z M7 16H10V19H7Z M4 19H7V22H4Z M10 19H13V22H10Z M1 22H4V25H1Z M7 22H10V25H7Z M4 25H7V28H4Z M10 25H13V28H10Z M1 27H4V30H1Z M7 27H10V30H7Z" fill="#000"/></svg>
<div style="position:absolute;left:125px;top:290.5px;font-family:'Liberation Sans', sans-serif;font-size:23px;line-height:1;white-space:pre;letter-spacing:0.6px">zhengjiao</div>
<div style="position:absolute;left:101px;top:322px;width:1px;height:12px;background:repeating-linear-gradient(#9a9a9a 0 1px,transparent 1px 3px)"></div>
<div style="position:absolute;left:92px;top:333px;width:19px;height:19px;border:2px solid #909090;background:linear-gradient(#ffffff,#e2e2e2)"></div><div style="position:absolute;left:96px;top:341px;width:11px;height:2px;background:#2a4a98"></div><div style="position:absolute;left:100px;top:337px;width:2px;height:11px;background:#2a4a98"></div>
<div style="position:absolute;left:111px;top:342px;width:11px;height:1px;background:repeating-linear-gradient(90deg,#9a9a9a 0 1px,transparent 1px 3px)"></div>
<svg width="0" height="0" style="position:absolute"><defs><linearGradient id="fg" x1="0" y1="0" x2="1" y2="1"><stop offset="0" stop-color="#fdf4c8"/><stop offset="0.5" stop-color="#f0c860"/><stop offset="1" stop-color="#c88a10"/></linearGradient></defs></svg>
<svg style="position:absolute;left:122px;top:327px" width="30" height="25" viewBox="0 0 30 25"><path d="M1 5V3Q1 1 3 1H11Q13 1 13 3V5" fill="#f4e4b0" stroke="#8a7a50" stroke-width="1.5"/><rect x="1" y="5" width="28" height="19" fill="url(#fg)" stroke="#7a6a40" stroke-width="1.5"/><path d="M1 23H29" stroke="#111" stroke-width="2.5"/></svg>
<div style="position:absolute;left:164px;top:330.5px;font-family:'Liberation Sans', sans-serif;font-size:23px;line-height:1;white-space:pre;letter-spacing:-0.27px">User Sources</div>
<div style="position:absolute;left:101px;top:352px;width:1px;height:22px;background:repeating-linear-gradient(#9a9a9a 0 1px,transparent 1px 3px)"></div>
<div style="position:absolute;left:92px;top:373px;width:19px;height:19px;border:2px solid #909090;background:linear-gradient(#ffffff,#e2e2e2)"></div><div style="position:absolute;left:96px;top:381px;width:11px;height:2px;background:#2a4a98"></div><div style="position:absolute;left:100px;top:377px;width:2px;height:11px;background:#2a4a98"></div>
<div style="position:absolute;left:111px;top:382px;width:11px;height:1px;background:repeating-linear-gradient(90deg,#9a9a9a 0 1px,transparent 1px 3px)"></div>
<svg style="position:absolute;left:122px;top:367px" width="30" height="25" viewBox="0 0 30 25"><path d="M1 5V3Q1 1 3 1H11Q13 1 13 3V5" fill="#f4e4b0" stroke="#8a7a50" stroke-width="1.5"/><rect x="1" y="5" width="28" height="19" fill="url(#fg)" stroke="#7a6a40" stroke-width="1.5"/><path d="M1 23H29" stroke="#111" stroke-width="2.5"/></svg>
<div style="position:absolute;left:166px;top:370.5px;font-family:'Liberation Sans', sans-serif;font-size:23px;line-height:1;white-space:pre;letter-spacing:1px">AiCube</div>
<div style="position:absolute;left:0px;top:992px;width:378px;height:34px;background:#f0f0f0"></div>
<div style="position:absolute;left:0px;top:992px;width:34px;height:34px;background:#f0f0f0;border-top:2px solid #fff;border-left:2px solid #fff;border-right:3px solid #7a7a7a;border-bottom:3px solid #7a7a7a"></div>
<svg style="position:absolute;left:9px;top:1001px" width="10" height="14" viewBox="0 0 10 14"><path d="M9 0V14L1 7Z" fill="#000"/></svg>
<div style="position:absolute;left:34px;top:992px;width:307px;height:34px;background:#f0f0f0;border-top:3px solid #fff;border-left:3px solid #fff;border-right:3px solid #7a7a7a;border-bottom:3px solid #7a7a7a"></div>
<div style="position:absolute;left:344px;top:992px;width:34px;height:34px;background:#f0f0f0;border-top:2px solid #fff;border-left:2px solid #fff;border-right:3px solid #7a7a7a;border-bottom:3px solid #7a7a7a"></div>
<svg style="position:absolute;left:357px;top:1001px" width="10" height="14" viewBox="0 0 10 14"><path d="M1 0V14L9 7Z" fill="#000"/></svg>
<div style="position:absolute;left:386px;top:222px;width:1823px;height:804px;background:#f7f7f7;border-left:2px solid #ababab;border-top:2px solid #ababab;border-bottom:2px solid #ababab"></div>
<div style="position:absolute;left:388px;top:268px;width:1821px;height:2px;background:#b0b0b0"></div>
<div style="position:absolute;left:388px;top:270px;width:1821px;height:3px;background:#b9a7de"></div>
<div style="position:absolute;left:388px;top:268px;width:4px;height:756px;background:#b9a7de"></div>
<div style="position:absolute;left:388px;top:1020px;width:1821px;height:4px;background:#b9a7de"></div>
<div style="position:absolute;left:392px;top:273px;width:1817px;height:747px;border-left:4px solid #6a6a6a;border-top:3px solid #6a6a6a;background:#fff"></div>
<div style="position:absolute;left:392px;top:273px;width:1817px;height:1px;background:#a4a4a4"></div>
<div style="position:absolute;left:392px;top:273px;width:1px;height:745px;background:#a4a4a4"></div>
<div style="position:absolute;left:662px;top:226px;width:153px;height:2px;background:#ababab"></div>
<div style="position:absolute;left:662px;top:228px;width:150px;height:2px;background:#f6f9fd"></div>
<div style="position:absolute;left:662px;top:230px;width:150px;height:38px;background:#c6d5f1"></div>
<div style="position:absolute;left:812px;top:226px;width:3px;height:42px;background:#acacac"></div>
<svg style="position:absolute;left:662px;top:226px" width="14" height="14" viewBox="0 0 14 14"><path d="M0 0H14L0 14Z" fill="#f7f7f7"/><path d="M1 13L13 1" stroke="#9a9a9a" stroke-width="1.4" stroke-dasharray="1.4 1.4"/></svg>
<svg style="position:absolute;left:682px;top:232px" width="25" height="31" viewBox="0 0 25 31"><defs><linearGradient id="dg" x1="0" y1="0" x2="1" y2="1"><stop offset="0.3" stop-color="#ffffff"/><stop offset="1" stop-color="#bcd0f4"/></linearGradient><pattern id="ck" width="4" height="4" patternUnits="userSpaceOnUse" x="2" y="3"><rect width="4" height="4" fill="none"/><rect width="2" height="2" fill="#a8a8a8"/><rect x="2" y="2" width="2" height="2" fill="#a8a8a8"/></pattern></defs><path d="M2 2H17L22 7V28H2Z" fill="url(#dg)"/><path d="M4 4H15V9L12 18L8 27H4Z" fill="url(#ck)"/><path d="M1 30V1H17" stroke="#a6b8d4" stroke-width="2" fill="none"/><path d="M17 2L23 8V29H2" stroke="#1c3050" stroke-width="2.2" fill="none"/><path d="M17 1V7H23" stroke="#8aa0c0" stroke-width="1.2" fill="none"/></svg>
<div style="position:absolute;left:727px;top:238.3px;font-family:'Liberation Sans', sans-serif;font-size:21px;line-height:1;white-space:pre;letter-spacing:0.9px">main.c</div>
<div style="position:absolute;left:816px;top:226px;width:140px;height:2px;background:#ababab"></div>
<div style="position:absolute;left:816px;top:228px;width:137px;height:2px;background:#f6f9fd"></div>
<div style="position:absolute;left:816px;top:230px;width:137px;height:38px;background:#fcd97a"></div>
<div style="position:absolute;left:953px;top:226px;width:3px;height:42px;background:#acacac"></div>
<svg style="position:absolute;left:816px;top:226px" width="14" height="14" viewBox="0 0 14 14"><path d="M0 0H14L0 14Z" fill="#f7f7f7"/><path d="M1 13L13 1" stroke="#9a9a9a" stroke-width="1.4" stroke-dasharray="1.4 1.4"/></svg>
<svg style="position:absolute;left:834px;top:232px" width="25" height="31" viewBox="0 0 25 31"><defs><linearGradient id="dg" x1="0" y1="0" x2="1" y2="1"><stop offset="0.3" stop-color="#ffffff"/><stop offset="1" stop-color="#bcd0f4"/></linearGradient><pattern id="ck" width="4" height="4" patternUnits="userSpaceOnUse" x="2" y="3"><rect width="4" height="4" fill="none"/><rect width="2" height="2" fill="#a8a8a8"/><rect x="2" y="2" width="2" height="2" fill="#a8a8a8"/></pattern></defs><path d="M2 2H17L22 7V28H2Z" fill="url(#dg)"/><path d="M4 4H15V9L12 18L8 27H4Z" fill="url(#ck)"/><path d="M1 30V1H17" stroke="#a6b8d4" stroke-width="2" fill="none"/><path d="M17 2L23 8V29H2" stroke="#1c3050" stroke-width="2.2" fill="none"/><path d="M17 1V7H23" stroke="#8aa0c0" stroke-width="1.2" fill="none"/></svg>
<div style="position:absolute;left:878px;top:238.3px;font-family:'Liberation Sans', sans-serif;font-size:21px;line-height:1;white-space:pre;letter-spacing:1.4px">uart.c</div>
<div style="position:absolute;left:957px;top:226px;width:139px;height:2px;background:#ababab"></div>
<div style="position:absolute;left:957px;top:228px;width:136px;height:2px;background:#f6f9fd"></div>
<div style="position:absolute;left:957px;top:230px;width:136px;height:38px;background:#bcd0a6"></div>
<div style="position:absolute;left:1093px;top:226px;width:3px;height:42px;background:#acacac"></div>
<svg style="position:absolute;left:957px;top:226px" width="14" height="14" viewBox="0 0 14 14"><path d="M0 0H14L0 14Z" fill="#f7f7f7"/><path d="M1 13L13 1" stroke="#9a9a9a" stroke-width="1.4" stroke-dasharray="1.4 1.4"/></svg>
<svg style="position:absolute;left:977px;top:232px" width="25" height="31" viewBox="0 0 25 31"><defs><linearGradient id="dg" x1="0" y1="0" x2="1" y2="1"><stop offset="0.3" stop-color="#ffffff"/><stop offset="1" stop-color="#bcd0f4"/></linearGradient><pattern id="ck" width="4" height="4" patternUnits="userSpaceOnUse" x="2" y="3"><rect width="4" height="4" fill="none"/><rect width="2" height="2" fill="#a8a8a8"/><rect x="2" y="2" width="2" height="2" fill="#a8a8a8"/></pattern></defs><path d="M2 2H17L22 7V28H2Z" fill="url(#dg)"/><path d="M4 4H15V9L12 18L8 27H4Z" fill="url(#ck)"/><path d="M1 30V1H17" stroke="#a6b8d4" stroke-width="2" fill="none"/><path d="M17 2L23 8V29H2" stroke="#1c3050" stroke-width="2.2" fill="none"/><path d="M17 1V7H23" stroke="#8aa0c0" stroke-width="1.2" fill="none"/></svg>
<div style="position:absolute;left:1021px;top:238.3px;font-family:'Liberation Sans', sans-serif;font-size:21px;line-height:1;white-space:pre;letter-spacing:1.2px">hfj.c*</div>
<div style="position:absolute;left:1097px;top:226px;width:130px;height:2px;background:#ababab"></div>
<div style="position:absolute;left:1097px;top:228px;width:127px;height:2px;background:#f6f9fd"></div>
<div style="position:absolute;left:1097px;top:230px;width:127px;height:38px;background:#f0a3a3"></div>
<div style="position:absolute;left:1224px;top:226px;width:3px;height:42px;background:#acacac"></div>
<svg style="position:absolute;left:1097px;top:226px" width="14" height="14" viewBox="0 0 14 14"><path d="M0 0H14L0 14Z" fill="#f7f7f7"/><path d="M1 13L13 1" stroke="#9a9a9a" stroke-width="1.4" stroke-dasharray="1.4 1.4"/></svg>
<svg style="position:absolute;left:1115px;top:232px" width="25" height="31" viewBox="0 0 25 31"><defs><linearGradient id="dh" x1="0" y1="0" x2="1" y2="1"><stop offset="0.35" stop-color="#ffffff"/><stop offset="1" stop-color="#b4c8f0"/></linearGradient></defs><path d="M2 2H17L22 7V28H2Z" fill="url(#dh)"/><path d="M1 30V1H17" stroke="#a6b8d4" stroke-width="2" fill="none"/><path d="M17 2L23 8V29H2" stroke="#1c3050" stroke-width="2.2" fill="none"/><path d="M17 1V7H23" stroke="#8aa0c0" stroke-width="1.2" fill="none"/></svg>
<div style="position:absolute;left:1158px;top:238.3px;font-family:'Liberation Sans', sans-serif;font-size:21px;line-height:1;white-space:pre;letter-spacing:2.0px">hfj.h</div>
<div style="position:absolute;left:1228px;top:226px;width:153px;height:2px;background:#ababab"></div>
<div style="position:absolute;left:1228px;top:228px;width:150px;height:2px;background:#f6f9fd"></div>
<div style="position:absolute;left:1228px;top:230px;width:150px;height:38px;background:#b9a7de"></div>
<div style="position:absolute;left:1378px;top:226px;width:3px;height:42px;background:#acacac"></div>
<svg style="position:absolute;left:1228px;top:226px" width="14" height="14" viewBox="0 0 14 14"><path d="M0 0H14L0 14Z" fill="#f7f7f7"/><path d="M1 13L13 1" stroke="#9a9a9a" stroke-width="1.4" stroke-dasharray="1.4 1.4"/></svg>
<svg style="position:absolute;left:1248px;top:232px" width="25" height="31" viewBox="0 0 25 31"><defs><linearGradient id="dg" x1="0" y1="0" x2="1" y2="1"><stop offset="0.3" stop-color="#ffffff"/><stop offset="1" stop-color="#bcd0f4"/></linearGradient><pattern id="ck" width="4" height="4" patternUnits="userSpaceOnUse" x="2" y="3"><rect width="4" height="4" fill="none"/><rect width="2" height="2" fill="#a8a8a8"/><rect x="2" y="2" width="2" height="2" fill="#a8a8a8"/></pattern></defs><path d="M2 2H17L22 7V28H2Z" fill="url(#dg)"/><path d="M4 4H15V9L12 18L8 27H4Z" fill="url(#ck)"/><path d="M1 30V1H17" stroke="#a6b8d4" stroke-width="2" fill="none"/><path d="M17 2L23 8V29H2" stroke="#1c3050" stroke-width="2.2" fill="none"/><path d="M17 1V7H23" stroke="#8aa0c0" stroke-width="1.2" fill="none"/></svg>
<div style="position:absolute;left:1289px;top:238.3px;font-family:'Liberation Sans', sans-serif;font-size:21px;line-height:1;white-space:pre;letter-spacing:1.5px">timer.c</div>
<div style="position:absolute;left:1382px;top:226px;width:137px;height:2px;background:#ababab"></div>
<div style="position:absolute;left:1382px;top:228px;width:134px;height:2px;background:#f6f9fd"></div>
<div style="position:absolute;left:1382px;top:230px;width:134px;height:38px;background:#9fc6b7"></div>
<div style="position:absolute;left:1516px;top:226px;width:3px;height:42px;background:#acacac"></div>
<svg style="position:absolute;left:1382px;top:226px" width="14" height="14" viewBox="0 0 14 14"><path d="M0 0H14L0 14Z" fill="#f7f7f7"/><path d="M1 13L13 1" stroke="#9a9a9a" stroke-width="1.4" stroke-dasharray="1.4 1.4"/></svg>
<svg style="position:absolute;left:1401px;top:232px" width="25" height="31" viewBox="0 0 25 31"><defs><linearGradient id="dg" x1="0" y1="0" x2="1" y2="1"><stop offset="0.3" stop-color="#ffffff"/><stop offset="1" stop-color="#bcd0f4"/></linearGradient><pattern id="ck" width="4" height="4" patternUnits="userSpaceOnUse" x="2" y="3"><rect width="4" height="4" fill="none"/><rect width="2" height="2" fill="#a8a8a8"/><rect x="2" y="2" width="2" height="2" fill="#a8a8a8"/></pattern></defs><path d="M2 2H17L22 7V28H2Z" fill="url(#dg)"/><path d="M4 4H15V9L12 18L8 27H4Z" fill="url(#ck)"/><path d="M1 30V1H17" stroke="#a6b8d4" stroke-width="2" fill="none"/><path d="M17 2L23 8V29H2" stroke="#1c3050" stroke-width="2.2" fill="none"/><path d="M17 1V7H23" stroke="#8aa0c0" stroke-width="1.2" fill="none"/></svg>
<div style="position:absolute;left:1444px;top:238.3px;font-family:'Liberation Sans', sans-serif;font-size:21px;line-height:1;white-space:pre;letter-spacing:0.9px">lcm.c</div>
<div style="position:absolute;left:1520px;top:226px;width:136px;height:2px;background:#ababab"></div>
<div style="position:absolute;left:1520px;top:228px;width:133px;height:2px;background:#f6f9fd"></div>
<div style="position:absolute;left:1520px;top:230px;width:133px;height:38px;background:#f7b586"></div>
<div style="position:absolute;left:1653px;top:226px;width:3px;height:42px;background:#acacac"></div>
<svg style="position:absolute;left:1520px;top:226px" width="14" height="14" viewBox="0 0 14 14"><path d="M0 0H14L0 14Z" fill="#f7f7f7"/><path d="M1 13L13 1" stroke="#9a9a9a" stroke-width="1.4" stroke-dasharray="1.4 1.4"/></svg>
<svg style="position:absolute;left:1538px;top:232px" width="25" height="31" viewBox="0 0 25 31"><defs><linearGradient id="dg" x1="0" y1="0" x2="1" y2="1"><stop offset="0.3" stop-color="#ffffff"/><stop offset="1" stop-color="#bcd0f4"/></linearGradient><pattern id="ck" width="4" height="4" patternUnits="userSpaceOnUse" x="2" y="3"><rect width="4" height="4" fill="none"/><rect width="2" height="2" fill="#a8a8a8"/><rect x="2" y="2" width="2" height="2" fill="#a8a8a8"/></pattern></defs><path d="M2 2H17L22 7V28H2Z" fill="url(#dg)"/><path d="M4 4H15V9L12 18L8 27H4Z" fill="url(#ck)"/><path d="M1 30V1H17" stroke="#a6b8d4" stroke-width="2" fill="none"/><path d="M17 2L23 8V29H2" stroke="#1c3050" stroke-width="2.2" fill="none"/><path d="M17 1V7H23" stroke="#8aa0c0" stroke-width="1.2" fill="none"/></svg>
<div style="position:absolute;left:1581px;top:238.3px;font-family:'Liberation Sans', sans-serif;font-size:21px;line-height:1;white-space:pre;letter-spacing:0.9px">exti.c</div>
<div style="position:absolute;left:1657px;top:226px;width:169px;height:2px;background:#ababab"></div>
<div style="position:absolute;left:1657px;top:228px;width:166px;height:2px;background:#f6f9fd"></div>
<div style="position:absolute;left:1657px;top:230px;width:166px;height:38px;background:#d9a9c3"></div>
<div style="position:absolute;left:1823px;top:226px;width:3px;height:42px;background:#acacac"></div>
<svg style="position:absolute;left:1657px;top:226px" width="14" height="14" viewBox="0 0 14 14"><path d="M0 0H14L0 14Z" fill="#f7f7f7"/><path d="M1 13L13 1" stroke="#9a9a9a" stroke-width="1.4" stroke-dasharray="1.4 1.4"/></svg>
<svg style="position:absolute;left:1675px;top:232px" width="25" height="31" viewBox="0 0 25 31"><defs><linearGradient id="dg" x1="0" y1="0" x2="1" y2="1"><stop offset="0.3" stop-color="#ffffff"/><stop offset="1" stop-color="#bcd0f4"/></linearGradient><pattern id="ck" width="4" height="4" patternUnits="userSpaceOnUse" x="2" y="3"><rect width="4" height="4" fill="none"/><rect width="2" height="2" fill="#a8a8a8"/><rect x="2" y="2" width="2" height="2" fill="#a8a8a8"/></pattern></defs><path d="M2 2H17L22 7V28H2Z" fill="url(#dg)"/><path d="M4 4H15V9L12 18L8 27H4Z" fill="url(#ck)"/><path d="M1 30V1H17" stroke="#a6b8d4" stroke-width="2" fill="none"/><path d="M17 2L23 8V29H2" stroke="#1c3050" stroke-width="2.2" fill="none"/><path d="M17 1V7H23" stroke="#8aa0c0" stroke-width="1.2" fill="none"/></svg>
<div style="position:absolute;left:1719px;top:238.3px;font-family:'Liberation Sans', sans-serif;font-size:21px;line-height:1;white-space:pre;letter-spacing:-0.2px">MT_IIC.c</div>
<div style="position:absolute;left:1827px;top:226px;width:172px;height:2px;background:#ababab"></div>
<div style="position:absolute;left:1827px;top:228px;width:169px;height:2px;background:#f6f9fd"></div>
<div style="position:absolute;left:1827px;top:230px;width:169px;height:38px;background:#a5c3da"></div>
<div style="position:absolute;left:1996px;top:226px;width:3px;height:42px;background:#acacac"></div>
<svg style="position:absolute;left:1827px;top:226px" width="14" height="14" viewBox="0 0 14 14"><path d="M0 0H14L0 14Z" fill="#f7f7f7"/><path d="M1 13L13 1" stroke="#9a9a9a" stroke-width="1.4" stroke-dasharray="1.4 1.4"/></svg>
<svg style="position:absolute;left:1844px;top:232px" width="25" height="31" viewBox="0 0 25 31"><defs><linearGradient id="dh" x1="0" y1="0" x2="1" y2="1"><stop offset="0.35" stop-color="#ffffff"/><stop offset="1" stop-color="#b4c8f0"/></linearGradient></defs><path d="M2 2H17L22 7V28H2Z" fill="url(#dh)"/><path d="M1 30V1H17" stroke="#a6b8d4" stroke-width="2" fill="none"/><path d="M17 2L23 8V29H2" stroke="#1c3050" stroke-width="2.2" fill="none"/><path d="M17 1V7H23" stroke="#8aa0c0" stroke-width="1.2" fill="none"/></svg>
<div style="position:absolute;left:1888px;top:238.3px;font-family:'Liberation Sans', sans-serif;font-size:21px;line-height:1;white-space:pre;letter-spacing:0.4px">MT_IIC.h</div>
<div style="position:absolute;left:2000px;top:226px;width:212px;height:2px;background:#ababab"></div>
<div style="position:absolute;left:2000px;top:228px;width:209px;height:2px;background:#f6f9fd"></div>
<div style="position:absolute;left:2000px;top:230px;width:209px;height:38px;background:#b5a6c1"></div>
<div style="position:absolute;left:2209px;top:226px;width:3px;height:42px;background:#acacac"></div>
<svg style="position:absolute;left:2000px;top:226px" width="14" height="14" viewBox="0 0 14 14"><path d="M0 0H14L0 14Z" fill="#f7f7f7"/><path d="M1 13L13 1" stroke="#9a9a9a" stroke-width="1.4" stroke-dasharray="1.4 1.4"/></svg>
<svg style="position:absolute;left:2016px;top:232px" width="25" height="31" viewBox="0 0 25 31"><path d="M2 2H17L22 7V28H2Z" fill="#fff"/><path d="M1 30V1H17" stroke="#7a7a7a" stroke-width="2" fill="none"/><path d="M17 1V7H23" stroke="#c0c0c0" stroke-width="1.2" fill="none"/><path d="M23 7V29H1" stroke="#000" stroke-width="2.4" fill="none"/></svg>
<div style="position:absolute;left:2063px;top:238.3px;font-family:'Liberation Sans', sans-serif;font-size:21px;line-height:1;white-space:pre;letter-spacing:0.9px">stc32g144k246</div>
<svg style="position:absolute;left:388px;top:224px" width="276" height="46" viewBox="0 0 276 46"><path d="M6 45L50 5H274V46H6Z" fill="#b9a7de"/><path d="M50 2H274" stroke="#ababab" stroke-width="2"/><path d="M50 4.5H272" stroke="#f6f9fd" stroke-width="2"/><path d="M0 45H6" stroke="#ababab" stroke-width="2"/><path d="M7 44L50 3" stroke="#8a8a8a" stroke-width="1.5" stroke-dasharray="1.5 1.5"/></svg>
<svg style="position:absolute;left:442px;top:232px" width="25" height="31" viewBox="0 0 25 31"><path d="M2 2H17L22 7V28H2Z" fill="#fff"/><path d="M1 30V1H17" stroke="#7a7a7a" stroke-width="2" fill="none"/><path d="M17 1V7H23" stroke="#c0c0c0" stroke-width="1.2" fill="none"/><path d="M23 7V29H1" stroke="#000" stroke-width="2.4" fill="none"/></svg>
<div style="position:absolute;left:487px;top:237.5px;font-family:'Liberation Sans', sans-serif;font-size:22px;line-height:1;white-space:pre;font-weight:bold">zhengjiao.map</div>
<div style="position:absolute;left:481px;top:264px;width:169px;height:4px;background:#000"></div>
<div style="position:absolute;left:396px;top:276px;width:40px;height:706px;background:#e6e6e6"></div>
<div style="position:absolute;left:436px;top:276px;width:29px;height:706px;background-color:#fff;background-image:repeating-conic-gradient(#ececec 0 25%,#ffffff 0 50%);background-size:4px 4px"></div>
<div style="position:absolute;left:396px;top:982px;width:1813px;height:2px;background:#fff"></div>
<div style="position:absolute;left:396px;top:984px;width:1813px;height:34px;background:#efefef"></div>
<div style="position:absolute;left:430px;top:998px;width:1050px;height:4px;background:#888"></div>
<div style="position:absolute;left:392px;top:1018px;width:1817px;height:2px;background:#fff"></div>
<div style="position:absolute;left:466px;top:724px;width:1743px;height:32px;background:#ddfce2"></div>
<div style="position:absolute;left:550px;top:724px;width:574px;height:32px;background:#85c3f5"></div>
<div style="position:absolute;left:548px;top:724px;width:2px;height:32px;background:#000"></div>
<div style="position:absolute;left:466px;top:280px;height:32px;font-family:'Liberation Mono', monospace;font-size:23.38px;line-height:32px;white-space:pre;letter-spacing:0">      00FF3D97H   ECODE    ---       HSPWMC_ReadReg?</div>
<div style="position:absolute;left:466px;top:312px;height:32px;font-family:'Liberation Mono', monospace;font-size:23.38px;line-height:32px;white-space:pre;letter-spacing:0">      00FF3DC8H   ECODE    ---       HSPWMC_WriteReg?</div>
<div style="position:absolute;left:466px;top:344px;height:32px;font-family:'Liberation Mono', monospace;font-size:23.38px;line-height:32px;white-space:pre;letter-spacing:0">      00FF3DEDH   ECODE    ---       HSPWMD_ReadReg?</div>
<div style="position:absolute;left:466px;top:376px;height:32px;font-family:'Liberation Mono', monospace;font-size:23.38px;line-height:32px;white-space:pre;letter-spacing:0">      00FF3E1EH   ECODE    ---       HSPWMD_WriteReg?</div>
<div style="position:absolute;left:466px;top:408px;height:32px;font-family:'Liberation Mono', monospace;font-size:23.38px;line-height:32px;white-space:pre;letter-spacing:0">      00FF3E43H   ECODE    ---       HSPWME_ReadReg?</div>
<div style="position:absolute;left:466px;top:440px;height:32px;font-family:'Liberation Mono', monospace;font-size:23.38px;line-height:32px;white-space:pre;letter-spacing:0">      00FF3E74H   ECODE    ---       HSPWME_WriteReg?</div>
<div style="position:absolute;left:466px;top:472px;height:32px;font-family:'Liberation Mono', monospace;font-size:23.38px;line-height:32px;white-space:pre;letter-spacing:0">      00FF3E99H   ECODE    ---       HSPWMF_ReadReg?</div>
<div style="position:absolute;left:466px;top:504px;height:32px;font-family:'Liberation Mono', monospace;font-size:23.38px;line-height:32px;white-space:pre;letter-spacing:0">      00FF3ECAH   ECODE    ---       HSPWMF_WriteReg?</div>
<div style="position:absolute;left:466px;top:536px;height:32px;font-family:'Liberation Mono', monospace;font-size:23.38px;line-height:32px;white-space:pre;letter-spacing:0">      0000011AH   EDATA    BYTE      huidu_threshold</div>
<div style="position:absolute;left:466px;top:568px;height:32px;font-family:'Liberation Mono', monospace;font-size:23.38px;line-height:32px;white-space:pre;letter-spacing:0">*SFR* 000000C7H   DATA     BYTE      IAP_CONTR</div>
<div style="position:absolute;left:466px;top:600px;height:32px;font-family:'Liberation Mono', monospace;font-size:23.38px;line-height:32px;white-space:pre;letter-spacing:0">*SFR* 000000F5H   DATA     BYTE      IAP_TPS</div>
<div style="position:absolute;left:466px;top:632px;height:32px;font-family:'Liberation Mono', monospace;font-size:23.38px;line-height:32px;white-space:pre;letter-spacing:0">*SFR* 000000A8H   DATA     BYTE      IE</div>
<div style="position:absolute;left:466px;top:664px;height:32px;font-family:'Liberation Mono', monospace;font-size:23.38px;line-height:32px;white-space:pre;letter-spacing:0">*SFR* 000000AFH   DATA     BYTE      IE2</div>
<div style="position:absolute;left:466px;top:696px;height:32px;font-family:'Liberation Mono', monospace;font-size:23.38px;line-height:32px;white-space:pre;letter-spacing:0">      0000031BH   EDATA    ---       img</div>
<div style="position:absolute;left:466px;top:728px;height:32px;font-family:'Liberation Mono', monospace;font-size:23.38px;line-height:32px;white-space:pre;letter-spacing:0">      00010000H   XDATA    ---       img_buffer</div>
<div style="position:absolute;left:466px;top:760px;height:32px;font-family:'Liberation Mono', monospace;font-size:23.38px;line-height:32px;white-space:pre;letter-spacing:0">      000002C7H   EDATA    BYTE      InEpState</div>
<div style="position:absolute;left:466px;top:888px;height:32px;font-family:'Liberation Mono', monospace;font-size:23.38px;line-height:32px;white-space:pre;letter-spacing:0">      0000039AH   EDATA    BYTE      init_result</div>
<div style="position:absolute;left:466px;top:920px;height:32px;font-family:'Liberation Mono', monospace;font-size:23.38px;line-height:32px;white-space:pre;letter-spacing:0">*SFR* 0000008FH   DATA     BYTE      INTCLKO</div>
<div style="position:absolute;left:466px;top:952px;height:32px;font-family:'Liberation Mono', monospace;font-size:23.38px;line-height:32px;white-space:pre;letter-spacing:0">*SFR* 000000B8H   DATA     BYTE      IP</div>
<div style="position:absolute;left:468px;top:794px;width:32px;height:22px;background:#000;border-radius:4px"></div>
<div style="position:absolute;left:469px;top:792px;font-family:'Liberation Mono', monospace;font-size:23.38px;line-height:32px;white-space:pre;color:#fff;letter-spacing:-1.5px">FF</div>
<div style="position:absolute;left:500.5px;top:792px;font-family:'Liberation Mono', monospace;font-size:23.38px;line-height:32px;white-space:pre">L251 LINKER/LOCATER V4.66.93.0</div>
<div style="position:absolute;left:1703.5px;top:792px;font-family:'Liberation Mono', monospace;font-size:23.38px;line-height:32px;white-space:pre">04/07/2026  18:37:22  PAGE 7</div>
<div style="position:absolute;left:0px;top:1026px;width:2209px;height:164px;background:#fff"></div>
<div style="position:absolute;left:0px;top:1034px;width:1178px;height:36px;background:linear-gradient(#bccbdc,#d8e4f0)"></div>
<div style="position:absolute;left:8px;top:1043.5px;font-family:'Liberation Sans', sans-serif;font-size:22px;line-height:1;white-space:pre;letter-spacing:0.45px">Command</div>
<svg style="position:absolute;left:1113px;top:1045px" width="16" height="18" viewBox="0 0 16 18"><path d="M3 1H13V11H3Z M5 3V11H9V3Z" fill="#000" fill-rule="evenodd"/><rect x="1" y="11" width="14" height="2" fill="#000"/><rect x="7" y="13" width="2" height="4" fill="#000"/></svg>
<div style="position:absolute;left:1146px;top:1042px;width:24px;height:24px;background:#c94f4f"></div><svg style="position:absolute;left:1152px;top:1048px" width="12" height="12" viewBox="0 0 12 12" shape-rendering="crispEdges"><path d="M0 0H5V2H0Z M7 0H12V2H7Z M2 2H10V4H2Z M4 4H8V6H4Z M2 6H10V8H2Z M0 8H5V10H0Z M7 8H12V10H7Z" fill="#fff"/></svg>
<div style="position:absolute;left:0px;top:1074px;width:1177px;height:116px;background:#f0f0f0;border-top:3px solid #7a7a7a;border-left:3px solid #7a7a7a;border-right:2px solid #dcdcdc"></div>
<div style="position:absolute;left:0px;top:1074px;width:1177px;height:1px;background:#a8a8a8"></div>
<div style="position:absolute;left:3px;top:1077px;width:1139px;height:103px;background:#fff"></div>
<svg style="position:absolute;left:1149px;top:1088px" width="18" height="14" viewBox="0 0 18 14"><path d="M1 13H17L9 2Z" fill="#a6a6a6"/></svg>
<svg style="position:absolute;left:1149px;top:1155px" width="18" height="14" viewBox="0 0 18 14"><path d="M1 1H17L9 12Z" fill="#a6a6a6"/></svg>
<div style="position:absolute;left:4.5px;top:1081px;font-family:'Liberation Mono', monospace;font-size:25px;letter-spacing:1px;line-height:32px;white-space:pre;color:#1a1a1a">Load &quot;C:\\Users\\26508\\Desktop\\STC32G_project\\<span style="display:inline-block;width:32px;font-family:'Liberation Sans', sans-serif;font-size:30px;vertical-align:top;line-height:30px;position:relative;top:-2px">赛</span><span style="display:inline-block;width:32px;font-family:'Liberation Sans', sans-serif;font-size:30px;vertical-align:top;line-height:30px;position:relative;top:-2px">道</span><span style="display:inline-block;width:32px;font-family:'Liberation Sans', sans-serif;font-size:30px;vertical-align:top;line-height:30px;position:relative;top:-2px">小</span><span style="display:inline-block;width:32px;font-family:'Liberation Sans', sans-serif;font-size:30px;vertical-align:top;line-height:30px;position:relative;top:-2px">车</span>V2.3\\<span style="display:inline-block;width:32px;font-family:'Liberation Sans', sans-serif;font-size:30px;vertical-align:top;line-height:30px;position:relative;top:-2px">图</span><span style="display:inline-block;width:32px;font-family:'Liberation Sans', sans-serif;font-size:30px;vertical-align:top;line-height:30px;position:relative;top:-2px">像</span><span style="display:inline-block;width:32px;font-family:'Liberation Sans', sans-serif;font-size:30px;vertical-align:top;line-height:30px;position:relative;top:-2px">识</span><span style="display:inline-block;width:32px;font-family:'Liberation Sans', sans-serif;font-size:30px;vertical-align:top;line-height:30px;position:relative;top:-2px">别</span></div>
<div style="position:absolute;left:1186px;top:1034px;width:1023px;height:36px;background:linear-gradient(#bccbdc,#d8e4f0)"></div>
<div style="position:absolute;left:1193px;top:1043.5px;font-family:'Liberation Sans', sans-serif;font-size:22px;line-height:1;white-space:pre;letter-spacing:0.4px">Memory 1</div>
<div style="position:absolute;left:1186px;top:1074px;width:1023px;height:116px;background:#f0f0f0;border-top:3px solid #9a9a9a;border-left:3px solid #9a9a9a"></div>
<div style="position:absolute;left:1210px;top:1103.5px;font-family:'Liberation Sans', sans-serif;font-size:21px;line-height:1;white-space:pre;">Address:</div>
<div style="position:absolute;left:1302px;top:1094px;width:907px;height:40px;background:#fff;border-top:3px solid #6a6a6a;border-left:3px solid #6a6a6a;border-bottom:2px solid #e3e3e3"></div>
<div style="position:absolute;left:1192px;top:1146px;width:1017px;height:44px;background:#fff;border-top:3px solid #8a8a8a"></div>
</body></html>
